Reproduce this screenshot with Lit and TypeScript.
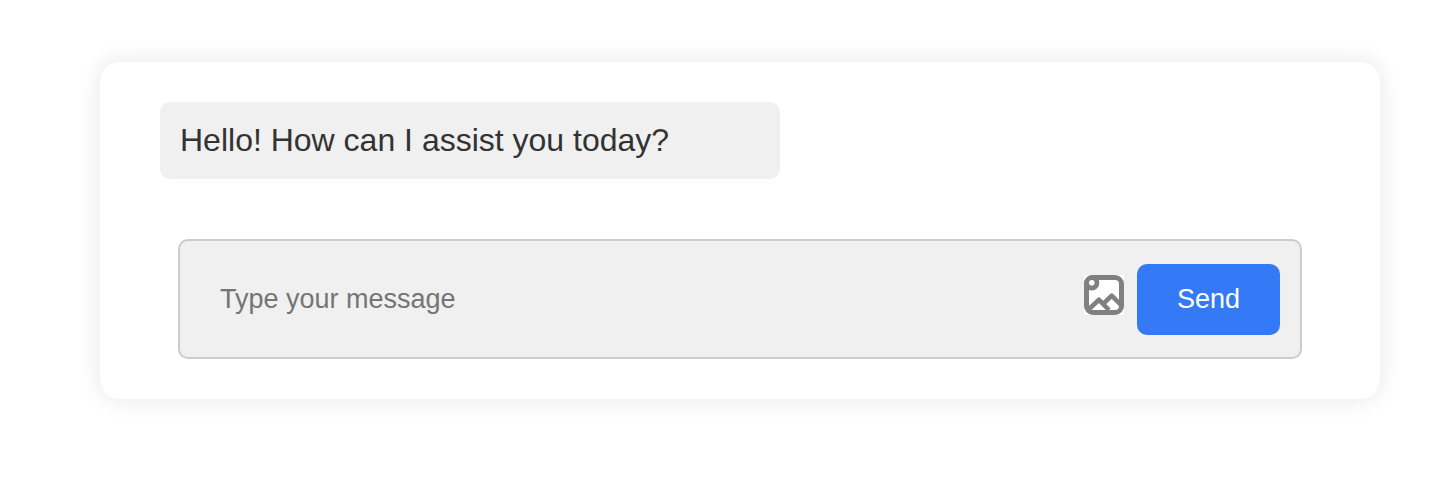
import { LitElement, html, css } from "lit";
import { customElement, state } from "lit/decorators.js";

@customElement("app-root")
export class AppRoot extends LitElement {
  static styles = css`
    :host {
      display: block;
      padding: 62px 66px 62px 100px;
      background: #fff;
      font-family: Arial, "Liberation Sans", sans-serif;
      color: #333;
    }
    .card {
      padding: 40px 60px;
      border-radius: 20px;
      background: #fff;
      box-shadow: 0 0 24px rgba(0, 0, 0, 0.1);
    }
    .message {
      box-sizing: content-box;
      width: 50%;
      margin: 0;
      padding: 20px;
      border-radius: 10px;
      background: #f0f0f0;
      font-size: 32px;
      line-height: 37px;
    }
    .composer {
      display: flex;
      align-items: center;
      margin: 60px 18px 0;
      padding: 23px 20px 22px 40px;
      border: 2px solid #ccc;
      border-radius: 10px;
      background: #f0f0f0;
    }
    .field {
      flex: 1;
      min-width: 0;
      padding: 0;
      border: 0;
      outline: 0;
      background: transparent;
      color: #333;
      font: inherit;
      font-size: 27px;
      line-height: 31px;
    }
    .field::placeholder {
      color: #757575;
      opacity: 1;
    }
    .attach {
      display: flex;
      margin: 0 13px 10px 20px;
      padding: 0;
      border: 0;
      background: #fff;
      cursor: pointer;
    }
    .icon {
      display: block;
      width: 40px;
      height: 40px;
    }
    .send {
      padding: 20px 40px;
      border: 0;
      border-radius: 10px;
      background: #347af6;
      color: #fff;
      font: inherit;
      font-size: 27px;
      line-height: 31px;
      cursor: pointer;
    }
  `;

  @state() private draft = "";

  private onInput(e: Event) {
    this.draft = (e.target as HTMLInputElement).value;
  }

  private onSubmit(e: Event) {
    e.preventDefault();
    this.draft = "";
  }

  render() {
    return html`
      <main class="card">
        <p class="message">Hello! How can I assist you today?</p>
        <form class="composer" @submit=${this.onSubmit}>
          <input
            class="field"
            type="text"
            aria-label="Message"
            placeholder="Type your message"
            .value=${this.draft}
            @input=${this.onInput}
          />
          <button class="attach" type="button" aria-label="Attach image">
            <svg class="icon" viewBox="0 0 40 40" fill="none" stroke="#808080" stroke-width="5" aria-hidden="true">
              <rect x="2.5" y="2.5" width="35" height="35" rx="6.5" />
              <path d="M3 6Q3 3 6 3H9V9H3Z" fill="#808080" stroke="none" />
              <circle cx="7.8" cy="7.8" r="5.2" fill="#fff" stroke-width="4.8" />
              <path d="M4 35 15 24.8 25 35M20 28.2 27.7 20.6 37 30" stroke-width="4.6" stroke-linejoin="round" />
            </svg>
          </button>
          <button class="send" type="submit">Send</button>
        </form>
      </main>
    `;
  }
}
